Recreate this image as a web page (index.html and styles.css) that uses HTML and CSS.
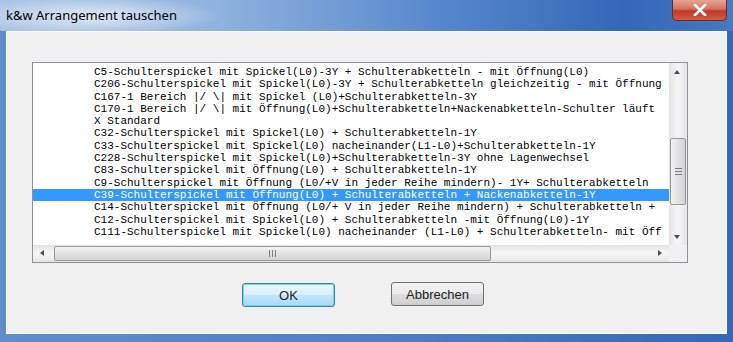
FILE: index.html
```html
<!DOCTYPE html>
<html lang="de">
  <head>
    <meta charset="UTF-8" />
    <title>k&amp;w Arrangement tauschen</title>
    <link rel="stylesheet" href="styles.css">
  </head>
  <body>
    <div class="window">
      <div class="titlebar">
        <span class="title">k&amp;w Arrangement tauschen</span>
        <div class="close">
          <svg width="16" height="12" viewBox="0 0 16 12">
            <path d="M3 1 L13 11 M13 1 L3 11" stroke="#fff" stroke-width="2.6" stroke-linecap="square" />
          </svg>
        </div>
      </div>
      <div class="client">
        <div class="listbox">
          <div class="items">
            <div class="row">C5-Schulterspickel mit Spickel(L0)-3Y + Schulterabketteln - mit Öffnung(L0)</div>
            <div class="row">C206-Schulterspickel mit Spickel(L0)-3Y + Schulterabketteln gleichzeitig - mit Öffnung</div>
            <div class="row">C167-1 Bereich |/ \| mit Spickel (L0)+Schulterabketteln-3Y</div>
            <div class="row">C170-1 Bereich |/ \| mit Öffnung(L0)+Schulterabketteln+Nackenabketteln-Schulter läuft</div>
            <div class="row">X Standard</div>
            <div class="row">C32-Schulterspickel mit Spickel(L0) + Schulterabketteln-1Y</div>
            <div class="row">C33-Schulterspickel mit Spickel(L0) nacheinander(L1-L0)+Schulterabketteln-1Y</div>
            <div class="row">C228-Schulterspickel mit Spickel(L0)+Schulterabketteln-3Y ohne Lagenwechsel</div>
            <div class="row">C83-Schulterspickel mit Öffnung(L0) + Schulterabketteln-1Y</div>
            <div class="row">C9-Schulterspickel mit Öffnung (L0/+V in jeder Reihe mindern)- 1Y+ Schulterabketteln</div>
            <div class="row selected">C39-Schulterspickel mit Öffnung(L0) + Schulterabketteln + Nackenabketteln-1Y</div>
            <div class="row">C14-Schulterspickel mit Öffnung (L0/+ V in jeder Reihe mindern) + Schulterabketteln +</div>
            <div class="row">C12-Schulterspickel mit Spickel(L0) + Schulterabketteln -mit Öffnung(L0)-1Y</div>
            <div class="row">C111-Schulterspickel mit Spickel(L0) nacheinander (L1-L0) + Schulterabketteln- mit Öff</div>
          </div>
          <div class="vscroll">
            <div class="arrow up"></div>
            <div class="vtrack">
              <div class="vthumb"><span class="grip-v"></span></div>
            </div>
            <div class="arrow down"></div>
          </div>
          <div class="hscroll">
            <div class="arrow left"></div>
            <div class="htrack">
              <div class="hthumb"><span class="grip-h"></span></div>
            </div>
            <div class="arrow right"></div>
          </div>
          <div class="corner"></div>
        </div>
        <div class="buttons">
          <button class="btn default">OK</button>
          <button class="btn">Abbrechen</button>
        </div>
      </div>
    </div>
  </body>
</html>
```

FILE: styles.css
```css
body {
  margin: 0;
  padding: 0;
  width: 733px;
  height: 342px;
  overflow: hidden;
}
.window {
  width: 733px;
  height: 342px;
  box-sizing: border-box;
  display: flex;
  flex-direction: column;
  background: linear-gradient(to right, #5f8ccb 0%, #4f80c4 50%, #3467b5 100%);
}
.titlebar {
  height: 31px;
  flex: none;
  display: flex;
  justify-content: space-between;
  align-items: flex-start;
  background:
    radial-gradient(ellipse 130px 20px at 92px 16px, rgba(255, 255, 255, 0.7), rgba(255, 255, 255, 0) 100%),
    linear-gradient(to right, #a9c3e4 0%, #8fb2de 30%, #5687cc 60%, #3467b8 85%, #4479c4 100%);
}
.title {
  font-family: "Noto Sans", "Liberation Sans", sans-serif;
  font-size: 13px;
  color: #000;
  margin: 6px 0 0 6px;
}
.close {
  width: 55px;
  height: 21px;
  margin-right: 6px;
  box-sizing: border-box;
  border: 1px solid #6b2a25;
  border-top: none;
  border-radius: 0 0 5px 5px;
  background: linear-gradient(to bottom, #e7a493 0%, #d4725f 45%, #c0392b 55%, #d65a40 100%);
  display: flex;
  align-items: center;
  justify-content: center;
}
.client {
  flex: 1;
  margin: 0 6px 8px 6px;
  border: 1px solid #fff;
  background-color: #f0f0f0;
  padding: 30px 0 0 25px;
}
.listbox {
  width: 656px;
  height: 201px;
  box-sizing: border-box;
  border: 1px solid #8d9199;
  background-color: #fff;
  display: grid;
  grid-template-columns: 1fr 18px;
  grid-template-rows: 1fr 17px;
}
.items {
  overflow: hidden;
  padding-top: 3px;
  font-family: "Liberation Mono", monospace;
  font-size: 11px;
  color: #000;
}
.row {
  height: 12.3px;
  line-height: 12.3px;
  padding-left: 61px;
  white-space: pre;
}
.selected {
  background-color: #3399ff;
  color: #fff;
}
.vscroll {
  display: flex;
  flex-direction: column;
  background: linear-gradient(to right, #e3e3e3, #f3f3f3 40%, #f3f3f3 60%, #e3e3e3);
}
.vtrack {
  flex: 1;
  padding: 58px 1px 23px 1px;
  display: flex;
}
.vthumb {
  flex: 1;
  border: 1px solid #979797;
  border-radius: 2px;
  background: linear-gradient(to right, #f2f2f2, #e2e2e2 50%, #d3d3d3);
  display: flex;
  align-items: center;
  justify-content: center;
}
.grip-v {
  width: 7px;
  height: 5px;
  border-top: 1px solid #7d7d7d;
  border-bottom: 1px solid #7d7d7d;
  background: linear-gradient(#7d7d7d, #7d7d7d) center / 7px 1px no-repeat;
}
.hscroll {
  display: flex;
  background: linear-gradient(to bottom, #e3e3e3, #f3f3f3 40%, #f3f3f3 60%, #e3e3e3);
}
.htrack {
  flex: 1;
  padding: 1px 160px 1px 3px;
  display: flex;
}
.hthumb {
  flex: 1;
  border: 1px solid #979797;
  border-radius: 2px;
  background: linear-gradient(to bottom, #f2f2f2, #e2e2e2 50%, #d3d3d3);
  display: flex;
  align-items: center;
  justify-content: center;
}
.grip-h {
  width: 5px;
  height: 7px;
  border-left: 1px solid #7d7d7d;
  border-right: 1px solid #7d7d7d;
  background: linear-gradient(#7d7d7d, #7d7d7d) center / 1px 7px no-repeat;
}
.arrow {
  width: 18px;
  height: 17px;
  flex: none;
  position: relative;
}
.arrow::after {
  content: "";
  position: absolute;
  width: 0;
  height: 0;
}
.up::after {
  left: 5px;
  top: 7px;
  border-left: 3.5px solid transparent;
  border-right: 3.5px solid transparent;
  border-bottom: 4px solid #4d4d4d;
}
.down::after {
  left: 5px;
  top: 7px;
  border-left: 3.5px solid transparent;
  border-right: 3.5px solid transparent;
  border-top: 4px solid #4d4d4d;
}
.left::after {
  left: 7px;
  top: 5px;
  border-top: 3.5px solid transparent;
  border-bottom: 3.5px solid transparent;
  border-right: 4px solid #4d4d4d;
}
.right::after {
  left: 7px;
  top: 5px;
  border-top: 3.5px solid transparent;
  border-bottom: 3.5px solid transparent;
  border-left: 4px solid #4d4d4d;
}
.corner {
  background-color: #f0f0f0;
}
.buttons {
  display: flex;
  gap: 56px;
  padding: 19px 0 0 210px;
  align-items: flex-start;
}
.btn {
  width: 93px;
  height: 24px;
  font-family: "Liberation Sans", Arial, sans-serif;
  font-size: 13px;
  color: #222;
  border: 1px solid #707070;
  border-radius: 3px;
  background: linear-gradient(to bottom, #f2f2f2 0%, #ebebeb 48%, #dddddd 52%, #cfcfcf 100%);
  padding: 0;
}
.default {
  margin-top: 1px;
  border-color: #3c7fb1;
  box-shadow: inset 0 0 0 1px #7ad0f0;
  background: linear-gradient(to bottom, #eaf6fd 0%, #d9f0fc 48%, #bee6fd 52%, #a7d9f5 100%);
}
```
